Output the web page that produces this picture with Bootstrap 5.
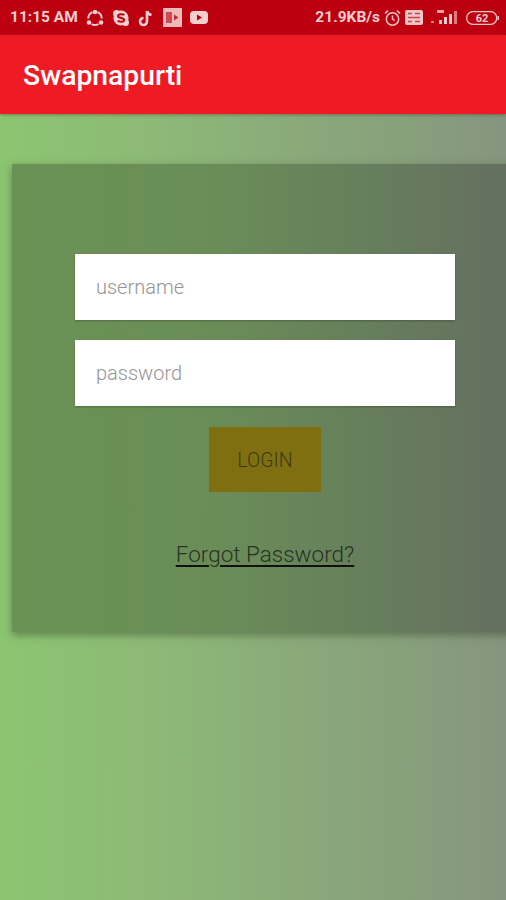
<!DOCTYPE html>
<html lang="en">
<head>
  <meta charset="UTF-8">
  <title>Swapnapurti</title>
  <meta name="viewport" content="width=device-width, initial-scale=1">
  <link href="https://cdn.jsdelivr.net/npm/bootstrap@5.3.0/dist/css/bootstrap.min.css" rel="stylesheet">
  <style>
    html, body {
      height: 100%;
    }
    body {
      width: 506px;
      height: 900px;
      overflow: hidden;
      font-family: Roboto, "Liberation Sans", sans-serif;
      background: linear-gradient(90deg, #8cc571 0%, #8db977 30%, #8aa97a 60%, #88a07c 80%, #85957f 100%);
    }
    .status-strip {
      height: 35px;
      background-color: #bd0010;
      color: #f3cfcf;
      font-size: 15.500px;
      font-weight: 700;
      padding: 0 7px 0 10px;
    }
    .status-strip svg {
      display: block;
    }
    .app-bar {
      height: 79px;
      background-color: #ee1b25;
      color: #fff;
      font-size: 28.300px;
      font-weight: 500;
      padding-left: 23px;
      padding-top: 4px;
      box-shadow: 0 1px 3px rgba(60, 60, 40, .45);
    }
    .login-panel {
      width: 506px;
      height: 468px;
      margin: 50px 0 0 12px;
      padding: 90px 63px 0;
      background: linear-gradient(90deg, #6b9255 0%, #6a8d58 40%, #667c5d 75%, #646e60 100%);
      box-shadow: 0 3px 8px rgba(50, 70, 40, .5);
    }
    .login-field {
      height: 66px;
      border: 0;
      border-radius: 0;
      padding-left: 21px;
      font-size: 20px;
      font-weight: 300;
      box-shadow: 0 1px 2px rgba(40, 50, 30, .4);
    }
    .login-field::placeholder {
      color: #949494;
    }
    .login-btn {
      width: 112px;
      height: 65px;
      margin-top: 21px;
      padding-top: 8px;
      border: 0;
      border-radius: 0;
      background-color: #7f6f10;
      color: #3a3a1c;
      font-size: 19.500px;
      font-weight: 300;
    }
    .forgot-link {
      margin-top: 46px;
      color: #26331f;
      font-size: 22.500px;
      font-weight: 300;
      text-decoration-thickness: 2px;
      text-underline-offset: 3px;
      text-decoration-color: #111;
    }
  </style>
</head>
<body>

  <!-- Status bar -->
  <div class="status-strip d-flex align-items-center justify-content-between">
    <div class="d-flex align-items-center">
      <span>11:15 AM</span>
      <!-- share icon -->
      <svg class="ms-2" width="18" height="18" viewBox="0 0 18 18" fill="none" stroke="#f3cfcf" stroke-width="2">
        <path d="M11.500 3.200A6.800 6.800 0 0 1 15.700 9.500M6.500 3.200A6.800 6.800 0 0 0 2.300 9.500M5.500 15A6.800 6.800 0 0 0 12.500 15"/>
        <circle cx="9" cy="3" r="2.300" fill="#f3cfcf" stroke="none"/>
        <circle cx="3" cy="13.500" r="2.300" fill="#f3cfcf" stroke="none"/>
        <circle cx="15" cy="13.500" r="2.300" fill="#f3cfcf" stroke="none"/>
      </svg>
      <!-- skype -->
      <svg class="ms-2" width="18" height="18" viewBox="0 0 18 18">
        <circle cx="9" cy="9" r="7.600" fill="#f3cfcf"/>
        <circle cx="4.500" cy="4.500" r="3.500" fill="#f3cfcf"/>
        <circle cx="13.500" cy="13.500" r="3.500" fill="#f3cfcf"/>
        <path d="M12.200 6.200C11 4.800 6.200 4.800 6 7c-.2 2.400 6.300 1.600 6.200 4-.1 2.200-5.100 2.200-6.500.6" fill="none" stroke="#bd0010" stroke-width="1.900"/>
      </svg>
      <!-- tiktok -->
      <svg class="ms-2" width="17" height="18" viewBox="0 0 17 18" fill="none" stroke="#f3cfcf" stroke-width="2.600">
        <path d="M9 2v10.500a3.500 3.500 0 1 1-3.500-3.500M9 2c.4 2.300 2 3.600 4.500 3.800"/>
      </svg>
      <!-- video -->
      <svg class="ms-2" width="19" height="19" viewBox="0 0 19 19">
        <rect width="19" height="19" fill="#edb9b9"/>
        <rect x="3" y="4" width="6" height="11" fill="#cf4a50"/>
        <path d="M11 6.500l4.500 3-4.500 3z" fill="#bd2a33"/>
      </svg>
      <!-- youtube -->
      <svg class="ms-2" width="18" height="13" viewBox="0 0 18 13">
        <rect width="18" height="13" rx="4" fill="#f3cfcf"/>
        <path d="M7 3.500l5 3-5 3z" fill="#bd0010"/>
      </svg>
    </div>
    <div class="d-flex align-items-center">
      <span>21.9KB/s</span>
      <!-- alarm -->
      <svg class="ms-1" width="17" height="18" viewBox="0 0 17 18" fill="none" stroke="#f0c4c4" stroke-width="1.500">
        <circle cx="8.500" cy="10" r="6.200"/>
        <path d="M8.500 6.500V10l2.200 1.500M1 4.500L4 1.600M16 4.500L13 1.600"/>
      </svg>
      <!-- sim box -->
      <svg class="ms-1" width="18" height="15" viewBox="0 0 18 15">
        <rect width="18" height="15" rx="2" fill="#efc6c6"/>
        <path d="M3 3.500h4M10 3.500h5M3 7.500h12M3 11.500h4M10 11.500h5" stroke="#c8434b" stroke-width="1.500"/>
      </svg>
      <!-- signal -->
      <svg class="ms-2" width="27" height="18" viewBox="0 0 27 18">
        <rect x="6" y="1" width="7" height="3" fill="#e6a6a6"/>
        <rect x="0" y="12" width="3" height="2" fill="#d97d7d"/>
        <rect x="8" y="11" width="3" height="4" fill="#f3cccc"/>
        <rect x="13" y="8" width="3" height="7" fill="#f3cccc"/>
        <rect x="18" y="5" width="3" height="10" fill="#f3cccc"/>
        <rect x="23" y="2" width="3" height="13" fill="#d97d7d"/>
      </svg>
      <!-- battery -->
      <svg class="ms-2" width="33" height="14" viewBox="0 0 33 14">
        <rect x=".7" y=".7" width="30" height="12.600" rx="6" fill="none" stroke="#f0c4c4" stroke-width="1.300"/>
        <rect x="31.500" y="5" width="1.500" height="4" fill="#f0c4c4"/>
        <text x="16" y="11" text-anchor="middle" font-family="Roboto, sans-serif" font-size="11" font-weight="700" fill="#f3cfcf">62</text>
      </svg>
    </div>
  </div>

  <!-- App bar -->
  <nav class="app-bar d-flex align-items-center">Swapnapurti</nav>

  <!-- Login -->
  <div class="login-panel">
    <form class="d-flex flex-column align-items-center">
      <input type="text" class="form-control login-field mb-3" placeholder="username">
      <input type="password" class="form-control login-field mt-1" placeholder="password">
      <button type="button" class="btn login-btn">LOGIN</button>
      <a href="#" class="forgot-link">Forgot Password?</a>
    </form>
  </div>

</body>
</html>
